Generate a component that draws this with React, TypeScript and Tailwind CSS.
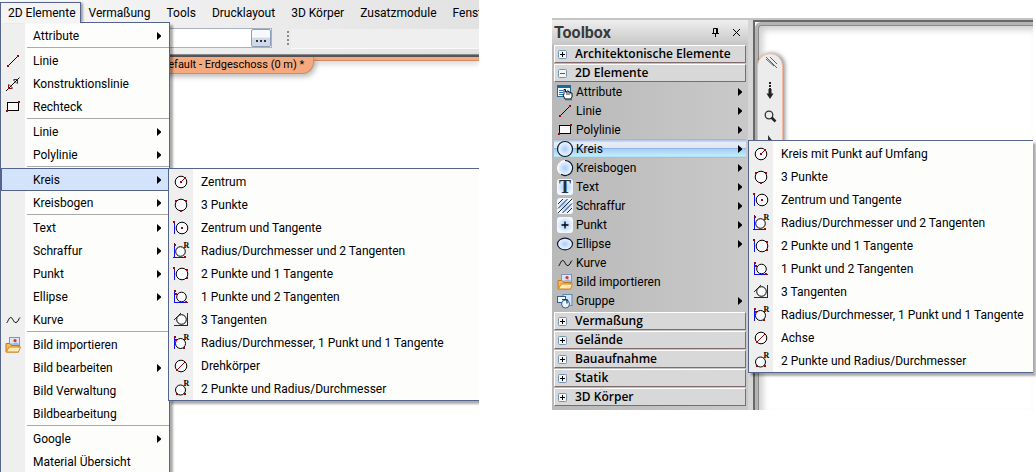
import { type ReactNode } from "react";
import clsx from "clsx";

type MenuEntry = {
  label: string;
  icon?: ReactNode;
  sub?: boolean;
  active?: boolean;
  separator?: boolean;
};

const RED = "#9c0808";
const BLUE = "#1010f0";

const Dot = ({ x, y }: { x: number; y: number }) => <rect x={x} y={y} width="2" height="2" fill={RED} />;

const Icon = ({ children }: { children: ReactNode }) => (
  <svg viewBox="0 0 18 18" className="size-[18px] shrink-0 overflow-visible" fill="none" stroke="none" aria-hidden="true">
    {children}
  </svg>
);

// circle construction symbol: round outline + blue tangents + red points
const CircleIcon = ({
  cx = 9,
  cy = 9,
  r = 5.8,
  tangents,
  redLine,
  dots = [],
  radius,
}: {
  cx?: number;
  cy?: number;
  r?: number;
  tangents?: string;
  redLine?: string;
  dots?: number[][];
  radius?: boolean;
}) => (
  <Icon>
    {tangents && <path d={tangents} stroke={BLUE} strokeWidth="1" />}
    <circle cx={cx} cy={cy} r={r} fill="#fafafa" stroke="#000" strokeWidth="1" />
    {redLine && <path d={redLine} stroke={RED} strokeWidth="1" />}
    {dots.map(([x, y]) => (
      <Dot key={`${x}-${y}`} x={x} y={y} />
    ))}
    {radius && (
      <text x="11.5" y="6" fontFamily="Liberation Serif, serif" fontWeight="700" fontSize="8" fill="#000">
        R
      </text>
    )}
  </Icon>
);

const CenterIcon = () => <CircleIcon redLine="M9 9L13 5" dots={[[8, 8], [12, 4]]} />;
const ThreePointsIcon = () => <CircleIcon dots={[[3, 4], [13, 4], [8, 14]]} />;
const CenterTangentIcon = () => <CircleIcon cx={10} tangents="M2.5 3V15" dots={[[1, 2], [9, 8]]} />;
const RadiusTwoTangentsIcon = () => (
  <CircleIcon cx={8.5} cy={9.5} r={4.8} tangents="M2.5 1V15.5M1 15.500H13" dots={[[2, 2], [12, 14]]} radius />
);
const TwoPointsTangentIcon = () => (
  <CircleIcon cx={10} tangents="M2.5 3V15" dots={[[1, 2], [14, 4], [14, 12]]} />
);
const PointTwoTangentsIcon = () => (
  <CircleIcon cx={9.5} cy={9} r={4.8} tangents="M2.5 2V14.500M2 14.500H16" dots={[[2, 2], [3, 5], [13, 13]]} />
);
const ThreeTangentsIcon = () => (
  <CircleIcon cx={9.5} cy={8.5} r={4.8} tangents="M2 9L9 2M15.500 2V14.500M2 14.500H16" />
);
const RadiusPointTangentIcon = () => (
  <CircleIcon cx={8.5} cy={9.5} r={5} tangents="M2.5 2V15" dots={[[2, 2], [3, 5], [11, 13]]} radius />
);
const AxisIcon = () => <CircleIcon redLine="M5 13L13 5" dots={[[4, 12]]} />;
const TwoPointsRadiusIcon = () => <CircleIcon cx={8.5} cy={10} r={5} dots={[[4, 13], [12, 13]]} radius />;

const LineIcon = () => (
  <Icon>
    <path d="M4 14L14 4" stroke="#000" strokeWidth="1" />
    <Dot x={3} y={13} />
    <Dot x={13} y={3} />
  </Icon>
);

const ConstructionIcon = () => (
  <Icon>
    <path d="M2 16L15.500 2.500" stroke="#000" strokeWidth="1" />
    <path d="M4.500 13.500V9.500M4.500 13.500H8.500M13.500 4.500H9.500M13.500 4.500V8.500" stroke={RED} strokeWidth="1" />
    <path d="M5 9.500L8.500 13M9.500 5L13 8.500" stroke="#000" strokeWidth="0.800" />
  </Icon>
);

const RectangleIcon = () => (
  <Icon>
    <rect x="3.500" y="4.500" width="11" height="8" fill="#fafafa" stroke="#000" strokeWidth="1" />
    <Dot x={2} y={12} />
    <Dot x={14} y={3} />
  </Icon>
);

const CurveIcon = () => (
  <Icon>
    <path d="M2.500 12C4 11 5 6 7 6.500S9.500 12 12 11.500 14.500 7.500 16 6.500" stroke="#000" strokeWidth="1" />
  </Icon>
);

const ImageImportIcon = () => (
  <Icon>
    <rect x="5.500" y="1.500" width="10" height="9" fill="#dbe5f5" stroke="#7f95c0" />
    <path d="M6 9c2-3 3-1 4-2s3-1 5 1v3H6z" fill="#a3b9e0" />
    <circle cx="11" cy="4.500" r="1.600" fill="#cc3b1d" />
    <path d="M2 7.500h4l1.500 2h7V16H2z" fill="#f7b95c" stroke="#c0781d" />
    <path d="M2.500 16L5 11h11.500L14.500 16z" fill="#ffe9b0" stroke="#d08a2a" />
  </Icon>
);

const AttributeIcon = () => (
  <Icon>
    <rect x="1.500" y="2.500" width="13" height="11" fill="#f1f8fe" stroke="#1c6a9c" />
    <path d="M1 2h14v3H1z" fill="#1c6a9c" />
    <path d="M3 7.500h4M3 9.500h4M3 11.500h4" stroke="#2d6fb0" />
    <path d="M9 16l-2-4 1-.5V6.500h1.500V9H11V8h1.500v1H14v1h2v4l-1.500 2z" fill="#fff" stroke="#000" strokeWidth="0.9" />
    <path d="M11 9v3M13 9.500V12" stroke="#000" strokeWidth="0.8" />
    <path d="M9 16.500h7" stroke="#1c6a9c" strokeWidth="1.5" />
  </Icon>
);

const CircleToolIcon = () => (
  <Icon>
    <defs>
      <radialGradient id="glow">
        <stop offset="0" stopColor="#a8cdfb" />
        <stop offset="1" stopColor="#f3f8ff" />
      </radialGradient>
    </defs>
    <circle cx="9" cy="9" r="7.500" fill="url(#glow)" stroke="#0d1a33" strokeWidth="1.2" />
  </Icon>
);

const ArcToolIcon = () => (
  <Icon>
    <circle cx="9" cy="9" r="7.500" fill="url(#glow)" stroke="#fff" />
    <path d="M9 1.500A7.500 7.500 0 1 1 5 15.300" stroke="#0d1a33" strokeWidth="1.200" />
  </Icon>
);

const TextToolIcon = () => (
  <Icon>
    <rect x="1" y="1" width="16" height="16" rx="3" fill="url(#glow)" />
    <text x="9" y="15" textAnchor="middle" fontFamily="Liberation Serif, serif" fontWeight="700" fontSize="18" fill="#26303d">
      T
    </text>
  </Icon>
);

const HatchIcon = () => (
  <Icon>
    <rect x="1" y="1" width="16" height="16" rx="3" fill="url(#glow)" />
    <path d="M2 7L7 2M2 11.500L11.500 2M2 16L16 2M6.500 16L16 6.500M11 16l5-5" stroke="#1b2a44" strokeWidth="1" />
  </Icon>
);

const PointToolIcon = () => (
  <Icon>
    <rect x="1" y="1" width="16" height="16" rx="3" fill="url(#glow)" />
    <path d="M9 5.500v7M5.500 9h7" stroke="#000" strokeWidth="1.300" />
  </Icon>
);

const EllipseIcon = () => (
  <Icon>
    <ellipse cx="9" cy="9" rx="7.500" ry="5.800" fill="url(#glow)" stroke="#0d1a33" strokeWidth="1.200" />
  </Icon>
);

const GroupIcon = () => (
  <Icon>
    <rect x="7" y="2.500" width="9" height="11" fill="#d3e5f7" stroke="#5a87b4" />
    <rect x="1.500" y="4.500" width="8" height="6" fill="#f4faff" stroke="#2d5f92" />
    <circle cx="9.500" cy="12" r="4" fill="#eaf4fd" stroke="#2d5f92" />
    <path d="M6 7.500h5v4" stroke="#17395e" strokeWidth="1.200" />
  </Icon>
);

const Arrow = () => (
  <svg viewBox="0 0 4 8" className="ml-auto h-2 w-1 shrink-0" aria-hidden="true">
    <path d="M0 0L4.500 4L0 8z" fill="#000" />
  </svg>
);

const menuBar = ["2D Elemente", "Vermaßung", "Tools", "Drucklayout", "3D Körper", "Zusatzmodule", "Fenst"];

const elementMenu: MenuEntry[] = [
  { label: "Attribute", sub: true, separator: true },
  { label: "Linie", icon: <LineIcon /> },
  { label: "Konstruktionslinie", icon: <ConstructionIcon /> },
  { label: "Rechteck", icon: <RectangleIcon />, separator: true },
  { label: "Linie", sub: true },
  { label: "Polylinie", sub: true, separator: true },
  { label: "Kreis", sub: true, active: true },
  { label: "Kreisbogen", sub: true, separator: true },
  { label: "Text", sub: true },
  { label: "Schraffur", sub: true },
  { label: "Punkt", sub: true },
  { label: "Ellipse", sub: true },
  { label: "Kurve", icon: <CurveIcon />, separator: true },
  { label: "Bild importieren", icon: <ImageImportIcon /> },
  { label: "Bild bearbeiten", sub: true },
  { label: "Bild Verwaltung" },
  { label: "Bildbearbeitung", separator: true },
  { label: "Google", sub: true },
  { label: "Material Übersicht" },
];

const circleMenu: MenuEntry[] = [
  { label: "Zentrum", icon: <CenterIcon /> },
  { label: "3 Punkte", icon: <ThreePointsIcon /> },
  { label: "Zentrum und Tangente", icon: <CenterTangentIcon /> },
  { label: "Radius/Durchmesser und 2 Tangenten", icon: <RadiusTwoTangentsIcon /> },
  { label: "2 Punkte und 1 Tangente", icon: <TwoPointsTangentIcon /> },
  { label: "1 Punkte und 2 Tangenten", icon: <PointTwoTangentsIcon /> },
  { label: "3 Tangenten", icon: <ThreeTangentsIcon /> },
  { label: "Radius/Durchmesser, 1 Punkt und 1 Tangente", icon: <RadiusPointTangentIcon /> },
  { label: "Drehkörper", icon: <AxisIcon /> },
  { label: "2 Punkte und Radius/Durchmesser", icon: <TwoPointsRadiusIcon /> },
];

const toolboxCircleMenu: MenuEntry[] = [
  { label: "Kreis mit Punkt auf Umfang", icon: <CenterIcon /> },
  { label: "3 Punkte", icon: <ThreePointsIcon /> },
  { label: "Zentrum und Tangente", icon: <CenterTangentIcon /> },
  { label: "Radius/Durchmesser und 2 Tangenten", icon: <RadiusTwoTangentsIcon /> },
  { label: "2 Punkte und 1 Tangente", icon: <TwoPointsTangentIcon /> },
  { label: "1 Punkt und 2 Tangenten", icon: <PointTwoTangentsIcon /> },
  { label: "3 Tangenten", icon: <ThreeTangentsIcon /> },
  { label: "Radius/Durchmesser, 1 Punkt und 1 Tangente", icon: <RadiusPointTangentIcon /> },
  { label: "Achse", icon: <AxisIcon /> },
  { label: "2 Punkte und Radius/Durchmesser", icon: <TwoPointsRadiusIcon /> },
];

const toolboxItems: MenuEntry[] = [
  { label: "Attribute", icon: <AttributeIcon />, sub: true },
  { label: "Linie", icon: <LineIcon />, sub: true },
  { label: "Polylinie", icon: <RectangleIcon />, sub: true },
  { label: "Kreis", icon: <CircleToolIcon />, sub: true, active: true },
  { label: "Kreisbogen", icon: <ArcToolIcon />, sub: true },
  { label: "Text", icon: <TextToolIcon />, sub: true },
  { label: "Schraffur", icon: <HatchIcon />, sub: true },
  { label: "Punkt", icon: <PointToolIcon />, sub: true },
  { label: "Ellipse", icon: <EllipseIcon />, sub: true },
  { label: "Kurve", icon: <CurveIcon /> },
  { label: "Bild importieren", icon: <ImageImportIcon /> },
  { label: "Gruppe", icon: <GroupIcon />, sub: true },
];

const MenuRow = ({ item }: { item: MenuEntry }) => (
  <li>
    <button
      className={clsx(
        "flex h-[23px] w-full items-center whitespace-nowrap border pl-0.5 pr-[7px] text-left",
        item.active ? "border-[#53648f] bg-[#d3e3fc]" : "border-transparent",
      )}
    >
      <span className="mr-[11px] flex w-[18px] shrink-0">{item.icon}</span>
      {item.label}
      {item.sub && <Arrow />}
    </button>
    {item.separator && <hr className="ml-[26px] h-0.5 border-0 border-t border-[#a9a9a9]" />}
  </li>
);

const MenuList = ({ items, className }: { items: MenuEntry[]; className: string }) => (
  <ul
    className={clsx(
      "border-[#53648f] bg-linear-to-r from-[#f0efef] from-[24px] to-[#fdfdfb] to-[24px] pt-px shadow-[3px_3px_2px_#00000055]",
      className,
    )}
  >
    {items.map((item, i) => (
      <MenuRow key={i} item={item} />
    ))}
  </ul>
);

const ToolboxGroup = ({ label, open }: { label: string; open?: boolean }) => (
  <button
    aria-expanded={!!open}
    className="mx-0.5 mb-px flex h-[18px] items-center gap-2 whitespace-nowrap border border-[#7f6a6c] border-l-white border-t-white bg-[#d8d8d8] pl-[3px] font-['Open_Sans',sans-serif] font-semibold"
  >
    <svg viewBox="0 0 9 9" className="size-[9px] shrink-0" aria-hidden="true">
      <rect x="0.500" y="0.500" width="8" height="8" rx="1" fill="#f3f5f6" stroke="#7595b3" />
      <path d={open ? "M2 4.500h5" : "M2 4.500h5M4.500 2v5"} stroke={open ? "#3c5c8c" : "#000"} />
    </svg>
    {label}
  </button>
);

const ModelWindow = () => (
  <section className="relative min-h-screen overflow-hidden">
    <div className="h-[54px] bg-linear-to-r from-[#f8f8f8] to-[#e2e2e2]">
      <nav className="flex h-6 items-start whitespace-nowrap pt-0.5">
        {menuBar.map((label, i) => (
          <button
            key={label}
            className={clsx(
              "h-[21px] shrink-0 border pl-[7px]",
              i === 0
                ? "relative z-20 border-[#53648f] border-b-0 bg-[#f4f4f4] pr-1 shadow-[3px_0_2px_-1px_#00000055]"
                : "border-transparent pr-[7px]",
            )}
          >
            {label}
          </button>
        ))}
      </nav>
      <div className="flex items-center pt-[3px]">
        <div className="flex h-5 w-[272px] border border-[#a9b2c3] bg-white">
          <input aria-label="Ebene" className="min-w-0 flex-1 outline-none" />
          <button
            aria-label="Auswählen"
            className="flex w-5 items-end justify-center gap-0.5 rounded-xs border border-[#8b9bb8] bg-linear-to-b from-[#f7f8fa] from-45% to-[#d0d9e8] to-50% pb-1"
          >
            <span className="size-0.5 bg-[#333]" />
            <span className="size-0.5 bg-[#333]" />
            <span className="size-0.5 bg-[#333]" />
          </button>
        </div>
        <div className="ml-[15px] flex flex-col gap-0.5">
          <span className="size-0.5 bg-[#8a8a8a]" />
          <span className="size-0.5 bg-[#8a8a8a]" />
          <span className="size-0.5 bg-[#8a8a8a]" />
          <span className="size-0.5 bg-[#8a8a8a]" />
        </div>
        <div className="ml-0.5 mt-0.5 h-5 flex-1 border-b border-[#fafafa] bg-[#efefef]" />
      </div>
    </div>
    <div className="h-[3px] border-t border-[#8d8d8d] bg-[#5a5a5a]" />
    <div className="h-1 border-b border-[#d08a66] bg-[#f5a97e] shadow-[0_2px_6px_#00000040]" />
    <div className="relative -mt-1 h-[17px] w-[314px] rounded-br-xl border-b border-r border-[#d08a66] bg-[#f5a97e] pl-[161px] text-[11px] leading-4 shadow-[2px_3px_5px_#00000040]">
      Default - Erdgeschoss (0 m) *
    </div>
    <MenuList items={elementMenu} className="absolute left-0 top-[22px] z-10 w-[170px] border" />
    <MenuList items={circleMenu} className="absolute left-[168px] right-0 top-[168px] z-20 border-y border-l" />
  </section>
);

const Toolbox = () => (
  <aside className="flex w-[196px] shrink-0 flex-col bg-linear-to-r from-[#b9b9b9] to-[#c9c9c9] pb-[3px]">
    <header className="flex h-[25px] items-center bg-linear-to-b from-[#efefef] to-[#c6c6c6] pl-0.5 pr-[7px]">
      <h2 className="text-base font-bold leading-5 text-[#3a3a3a]">Toolbox</h2>
      <button aria-label="Anheften" className="ml-auto">
        <svg viewBox="0 0 9 9" className="size-[9px]">
          <path d="M2.500 5V.5h4V5M5.500 1v4M1 5.500h7M4.500 6v3" stroke="#000" fill="none" />
        </svg>
      </button>
      <button aria-label="Schließen" className="ml-3">
        <svg viewBox="0 0 9 9" className="size-[9px]">
          <path d="M1 1l7 7M8 1L1 8" stroke="#000" />
        </svg>
      </button>
    </header>
    <ToolboxGroup label="Architektonische Elemente" />
    <ToolboxGroup label="2D Elemente" open />
    <ul className="-mt-px mb-0.5">
      {toolboxItems.map(item => (
        <li key={item.label}>
          <button
            className={clsx(
              "mx-0.5 flex h-[19px] w-[192px] items-center gap-0.5 whitespace-nowrap pl-0.5 pr-1 text-left",
              item.active &&
                "bg-[linear-gradient(#8fb0dd,#e9eef6_20%,#dfe6f2_45%,#86aee6_48%,#a9cdf3_55%,#bdf0fb_90%,#8fb0dd)]",
            )}
          >
            {item.icon}
            {item.label}
            {item.sub && <Arrow />}
          </button>
        </li>
      ))}
    </ul>
    {["Vermaßung", "Gelände", "Bauaufnahme", "Statik", "3D Körper"].map(label => (
      <ToolboxGroup key={label} label={label} />
    ))}
  </aside>
);

const ToolboxWindow = () => (
  <section className="relative mt-[18px] flex self-start border-t-2 border-[#c4c4c4]">
    <Toolbox />
    <div className="w-[5px] shrink-0 bg-[#d6d6d6]" />
    <div className="flex-1 border-l-2 border-t-2 border-[#686868]">
      <div className="h-full rounded-tl-md border-l-[3px] border-t-[3px] border-[#b4b4b4] bg-[#b4b4b4]">
        <div className="relative h-full rounded-tl border-l border-t border-[#8a8a8a] bg-white shadow-[inset_4px_4px_6px_#00000030]">
          <div className="absolute -left-0.5 top-[27px] flex h-[110px] w-[26px] flex-col items-center rounded-full border border-[#f5b9a3] bg-[#ececec] shadow-[2px_0_4px_#00000070]">
            <svg viewBox="0 0 24 90" className="h-[90px] w-6" fill="none" aria-hidden="true">
              <path d="M8 3l11 11M12 3l7 7M8 5l8 7" stroke="#555" strokeWidth="0.900" />
              <path d="M12 28v9" stroke="#222" strokeWidth="2" strokeDasharray="2 1" />
              <path d="M12 35v6" stroke="#222" strokeWidth="3" />
              <path d="M8.500 39.500h7L12 45z" fill="#222" />
              <circle cx="11" cy="61" r="3.800" stroke="#333" strokeWidth="1.300" />
              <path d="M13.500 63.500l4 4" stroke="#222" strokeWidth="2.500" />
              <path d="M10 81v8h6z" fill="#333" />
            </svg>
          </div>
        </div>
      </div>
    </div>
    <MenuList items={toolboxCircleMenu} className="absolute left-[196px] right-0 top-[120px] z-10 border-y border-l" />
  </section>
);

const App = () => {
  return (
    <main className="grid min-h-screen grid-cols-[479fr_481fr] gap-x-[73px] overflow-hidden bg-white pr-[3px] font-['Roboto',sans-serif] text-xs text-black">
      <ModelWindow />
      <ToolboxWindow />
    </main>
  );
};

export default App;
